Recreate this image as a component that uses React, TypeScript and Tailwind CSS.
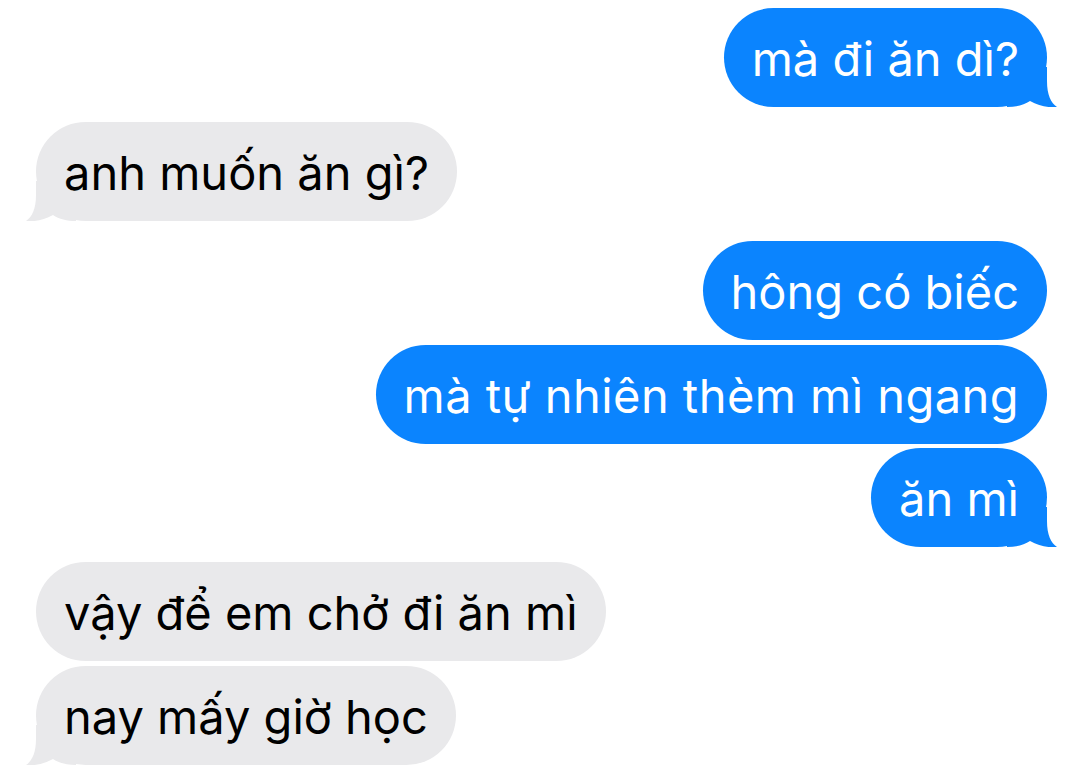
import React from "react";

type Msg = { text: string; me: boolean; tail: boolean; gap: string; extra?: string };

const messages: Msg[] = [
  { text: "mà đi ăn dì?", me: true, tail: true, gap: "mt-[8px]" },
  { text: "anh muốn ăn gì?", me: false, tail: true, gap: "mt-[15px]" },
  { text: "hông có biếc", me: true, tail: false, gap: "mt-[20px]" },
  { text: "mà tự nhiên thèm mì ngang", me: true, tail: false, gap: "mt-[5px]", extra: "tracking-[0.45px]" },
  { text: "ăn mì", me: true, tail: true, gap: "mt-[4px]" },
  { text: "vậy để em chở đi ăn mì", me: false, tail: false, gap: "mt-[15px]" },
  { text: "nay mấy giờ học", me: false, tail: true, gap: "mt-[5px]" },
];

function Tail({ me }: { me: boolean }) {
  return (
    <svg
      width="50"
      height="40"
      viewBox="0 0 50 40"
      className={
        me
          ? "absolute bottom-0 right-[-10px] text-[#0b84fe]"
          : "absolute bottom-0 left-[-10px] -scale-x-100 text-[#e9e9eb]"
      }
    >
      <path
        d="M0 0 H40 V14 C40 28 44 36 50 40 C42 41 32 39 23 34 C17 38 9 40 0 40 Z"
        fill="currentColor"
      />
    </svg>
  );
}

function Bubble({ m }: { m: Msg }) {
  return (
    <div
      className={
        "relative flex h-[99px] items-center rounded-full px-[28px] text-[47px] leading-none " +
        m.gap +
        " " +
        (m.me
          ? "self-end bg-[#0b84fe] text-white"
          : "self-start bg-[#e9e9eb] text-black")
      }
    >
      {m.tail && <Tail me={m.me} />}
      <span className={"relative pt-[2px] " + (m.extra ?? "")}>{m.text}</span>
    </div>
  );
}

export default function App() {
  return (
    <div
      className="flex h-[768px] w-[1080px] flex-col overflow-hidden bg-white pl-[36px] pr-[33px]"
      style={{ fontFamily: "Inter, 'Noto Sans', sans-serif" }}
    >
      {messages.map((m, i) => (
        <Bubble key={i} m={m} />
      ))}
    </div>
  );
}
